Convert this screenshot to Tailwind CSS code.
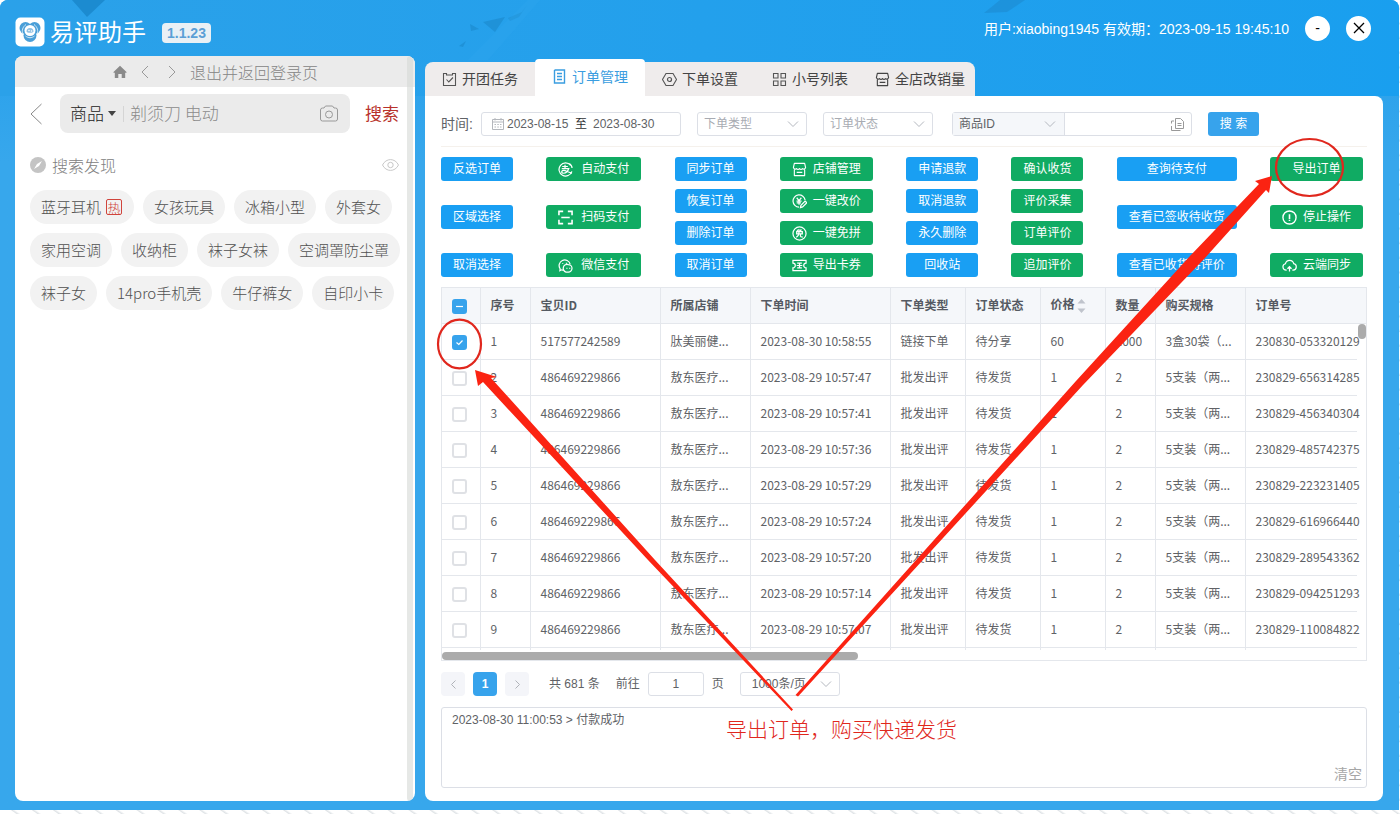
<!DOCTYPE html>
<html lang="zh-CN">
<head>
<meta charset="utf-8">
<title>易评助手</title>
<script src="https://cdn.jsdelivr.net/npm/@tailwindcss/browser@4"></script>
</head>
<body class="relative min-h-screen overflow-hidden bg-white bg-[repeating-linear-gradient(35deg,#ffffff_0px,#ffffff_9px,#dfe3e6_10px,#ffffff_12px)] font-['Liberation_Sans','Noto_Sans_CJK_SC',sans-serif] text-xs text-[#606266]">

<!-- shared icon shapes -->
<svg class="hidden" aria-hidden="true">
  <symbol id="down" viewBox="0 0 12 8"><path d="M1 1.500 6 6.500 11 1.500" fill="none" stroke="#b4b8bf" stroke-width="1"/></symbol>
  <symbol id="shop" viewBox="0 0 16 16"><path d="M2.500 1.500h11l1 4.500a2 2 0 0 1-3.300 1 2 2 0 0 1-3.200 0 2 2 0 0 1-3.200 0A2 2 0 0 1 1.500 6zM2.500 8v6.500h11V8M5 11h6" fill="none" stroke="currentColor" stroke-width="1.200" stroke-linejoin="round"/></symbol>
</svg>

<div class="relative mr-px flex h-[calc(100vh-4px)] flex-col overflow-hidden rounded-t-lg bg-[#36a6ec] bg-linear-to-b from-[#209eeb] to-[#37a7ec] to-20%">
  <div class="absolute inset-x-0 top-0 h-24 bg-linear-to-r from-[#2ba1e9] to-[#199fef]"></div>
  <svg class="absolute left-0 top-0" width="1100" height="96" aria-hidden="true">
    <g fill="#1c8bd0">
      <path d="M72 0h33L87 17z"/><path d="M483 22l22-5-10 15z" opacity=".7"/><path d="M508 18l14-6 5-7-8 12-9 4z" opacity=".5"/><path d="M470 24l9 5-8 2z" opacity=".7"/><path d="M459 46l7-5-3 6z" opacity=".7"/><path d="M984 13 1000 0h25l-18 12z" opacity=".6"/>
    </g>
    <path d="M540 0h-12l-60 60h20z" fill="#35a9ef" opacity=".2"/>
  </svg>

  <header class="relative flex h-14 shrink-0 items-center pl-[15px] pr-[28px]">
    <svg class="mt-2 shrink-0" width="30" height="30" viewBox="0 0 30 30" aria-hidden="true">
      <rect x=".5" y=".5" width="29" height="29" rx="5" fill="#fff"/>
      <circle cx="10.500" cy="11" r="6" fill="#4a9fd8"/><circle cx="19.500" cy="11" r="6" fill="#4a9fd8"/><circle cx="15" cy="18.500" r="6.500" fill="#4a9fd8"/>
      <path d="M8 17c-1.500-3-.5-7 3-9.500M22 17c1.500-3 .5-7-3-9.500M10.500 19c3 2.300 6 2.300 9 0" fill="none" stroke="#d3e9f6" stroke-width="1"/>
      <circle cx="15" cy="13.500" r="5.500" fill="#fff"/>
      <path d="M11.500 14.500a3.500 3.500 0 1 1 7 0c0 1.800-7 1.800-7 0z" fill="#8fc1e3"/><circle cx="14" cy="13.500" r=".8" fill="#fff"/><circle cx="16.500" cy="14" r=".8" fill="#fff"/>
    </svg>
    <h1 class="ml-[5px] mt-[9px] text-2xl leading-6 text-white">易评助手</h1>
    <span class="ml-4 mt-[9px] rounded-sm bg-[#e9f0f5] px-[5px] text-sm font-bold leading-5 text-[#5b9fd6]">1.1.23</span>
    <p class="ml-auto mt-[2px] text-sm text-white">用户:xiaobing1945 有效期：2023-09-15 19:45:10</p>
    <button class="ml-4 flex size-[25px] items-center justify-center rounded-full bg-white text-sm text-black" aria-label="最小化">-</button>
    <button class="ml-4 flex size-[25px] items-center justify-center rounded-full bg-white text-black" aria-label="关闭"><svg width="12" height="12" viewBox="0 0 12 12"><path d="M1 1l10 10M11 1 1 11" stroke="currentColor" stroke-width="1.300"/></svg></button>
  </header>

  <main class="relative flex min-h-0 flex-1 gap-[10px] pb-[9px] pl-[15px] pr-4">
    <!-- shop browser -->
    <aside class="relative flex w-[400px] shrink-0 flex-col overflow-hidden rounded-lg bg-white font-['Noto_Sans_CJK_SC',sans-serif] font-light">
      <div class="absolute inset-y-0 right-[2px] z-10 w-[6px] rounded bg-[#d5d9d5]/60"></div>
      <nav class="flex h-[31px] items-center bg-[#ebebeb] pl-[98px] text-base text-[#858585]">
        <button aria-label="首页"><svg width="14" height="14" viewBox="0 0 14 14"><path d="M7 .8 13.500 7v.8h-1.300V13H8.700V9H5.300v4H1.800V7.800H.5V7z" fill="#8a8a8a"/></svg></button>
        <button class="ml-[14px]" aria-label="后退"><svg width="8" height="14" viewBox="0 0 8 14"><path d="M7 1 1 7l6 6" fill="none" stroke="#999"/></svg></button>
        <button class="ml-[19px]" aria-label="前进"><svg width="8" height="14" viewBox="0 0 8 14"><path d="M1 1l6 6-6 6" fill="none" stroke="#999"/></svg></button>
        <a href="#" class="ml-[14px] leading-6">退出并返回登录页</a>
      </nav>
      <form class="mt-[7px] flex h-[39px] items-center pl-[15px] pr-4 text-[17px]">
        <button type="button" aria-label="返回"><svg width="12" height="22" viewBox="0 0 12 22"><path d="M11.500 1 1 11l10.500 10" fill="none" stroke="#888"/></svg></button>
        <div class="ml-[18px] flex h-full min-w-0 flex-1 items-center rounded-lg bg-[#ebebeb] pl-[10px] pr-3">
          <button type="button" class="flex items-center gap-1 text-[#222]">商品<svg width="8" height="5" viewBox="0 0 8 5"><path d="M0 0h8L4 5z" fill="#444"/></svg></button>
          <span class="ml-[7px] h-4 w-px bg-[#d5d5d5]"></span>
          <input class="ml-[6px] w-0 flex-1 bg-transparent outline-none placeholder:text-[#8c8c8c]" aria-label="搜索商品" placeholder="剃须刀 电动">
          <button type="button" aria-label="拍照搜索"><svg width="18" height="17" viewBox="0 0 18 17"><path d="M5.500 1h7L14 3h1.500a2 2 0 0 1 2 2v9a2 2 0 0 1-2 2h-13a2 2 0 0 1-2-2V5a2 2 0 0 1 2-2H4z" fill="none" stroke="#999"/><circle cx="9" cy="9.500" r="3.500" fill="none" stroke="#999"/></svg></button>
        </div>
        <button class="ml-[15px] font-normal text-[#b8322b]">搜索</button>
      </form>
      <div class="mt-5 flex items-center pl-[15px] pr-4 text-base leading-6 text-[#808080]">
        <svg width="16" height="16" viewBox="0 0 16 16"><circle cx="8" cy="8" r="8" fill="#c4c4c4"/><path d="M12 4 9 9 4 12l3-5z" fill="#fff"/></svg>
        <h2 class="ml-[6px]">搜索发现</h2>
        <button class="ml-auto" aria-label="隐藏"><svg width="17" height="12" viewBox="0 0 17 12"><path d="M.5 6C4-1.200 13-1.200 16.500 6 13 13.200 4 13.200.5 6z" fill="none" stroke="#c8c8c8"/><circle cx="8.500" cy="6" r="2.700" fill="none" stroke="#c8c8c8"/></svg></button>
      </div>
      <div id="tags" class="mt-[13px] flex flex-wrap gap-[9px] pl-[15px] pr-[14px] text-[15px] text-[#505050]"></div>
    </aside>

    <section class="flex min-w-0 flex-1 flex-col pt-[3px]">
      <nav class="relative flex h-[37px] shrink-0 items-end text-sm text-[#444]">
        <button class="flex h-[34px] w-[110px] items-center justify-center gap-[5px] rounded-tl-lg bg-[#efecec]"><svg width="15" height="15" viewBox="0 0 15 15"><path d="M1.500 1.500h3V3h6V1.500h3v12h-12zM4.500 7.500l2.300 2.500L11 5.500" fill="none" stroke="#555" stroke-width="1.100"/></svg>开团任务</button>
        <button class="flex h-[37px] w-[110px] items-center justify-center gap-[5px] rounded-t bg-white pb-[2px] text-[#3a9de0]"><svg width="15" height="15" viewBox="0 0 15 15"><path d="M2.500 1h10v11.500M2.500 1v13h10v-2M5 4.500h5M5 7.500h5M5 10.500h5" fill="none" stroke="currentColor" stroke-width="1.400"/></svg>订单管理</button>
        <button class="flex h-[34px] w-[110px] items-center justify-center gap-[5px] bg-[#efecec]"><svg width="15" height="15" viewBox="0 0 15 15"><path d="M4 1.500h7l3.500 6-3.500 6H4l-3.500-6z" fill="none" stroke="#555" stroke-width="1.100"/><circle cx="7.500" cy="7.500" r="2" fill="none" stroke="#555" stroke-width="1.200"/></svg>下单设置</button>
        <button class="flex h-[34px] w-[110px] items-center justify-center gap-[5px] bg-[#efecec]"><svg width="15" height="15" viewBox="0 0 15 15"><path d="M1.500 1.500h4.500V6H1.500zM9 1.500h4.500V6H9zM1.500 9h4.500v4.500H1.500zM9 9h4.500v4.500H9z" fill="none" stroke="#555" stroke-width="1.100"/></svg>小号列表</button>
        <button class="flex h-[34px] w-[110px] items-center justify-center gap-[5px] rounded-tr-lg bg-[#efecec]"><svg width="15" height="15"><use href="#shop"/></svg>全店改销量</button>
      </nav>

      <div class="flex min-h-0 flex-1 flex-col rounded-b-lg rounded-tr-lg bg-white px-4 pb-[13px] pt-4">
        <form class="flex h-6 shrink-0 items-center">
          <label for="from" class="w-[30px] whitespace-nowrap text-sm">时间:</label>
          <div class="ml-[10px] flex h-6 w-[200px] items-center rounded-[3px] border border-[#dcdfe6] pl-[10px] text-[#606266]">
            <svg class="shrink-0" width="12" height="12" viewBox="0 0 12 12"><path d="M.5 1.500h11v10H.5zM.5 4h11M3 0v2.500M9 0v2.500M2.500 6.500h1.500M5.300 6.500h1.500M8 6.500h1.500M2.500 9h1.500M5.300 9h1.500M8 9h1.500" fill="none" stroke="#b4b7bc"/></svg>
            <input id="from" class="ml-[3px] w-[64px] outline-none" value="2023-08-15">
            <span class="ml-1 mr-[6px] text-[#303133]">至</span>
            <input class="w-[66px] outline-none" aria-label="结束日期" value="2023-08-30">
          </div>
          <div class="relative ml-4 w-[110px]"><select aria-label="下单类型" class="h-6 w-full appearance-none rounded-[3px] border border-[#dcdfe6] bg-white pl-[6px] leading-[22px] text-[#a8abb2] outline-none"><option>下单类型</option></select><svg class="pointer-events-none absolute right-2 top-2" width="12" height="8"><use href="#down"/></svg></div>
          <div class="relative ml-4 w-[110px]"><select aria-label="订单状态" class="h-6 w-full appearance-none rounded-[3px] border border-[#dcdfe6] bg-white pl-[6px] leading-[22px] text-[#a8abb2] outline-none"><option>订单状态</option></select><svg class="pointer-events-none absolute right-2 top-2" width="12" height="8"><use href="#down"/></svg></div>
          <div class="ml-[19px] flex h-6 w-60 rounded-[3px] border border-[#dcdfe6]">
            <div class="relative w-[112px] border-r border-[#dcdfe6] bg-[#f5f7fa]"><select aria-label="查询字段" class="h-[22px] w-full appearance-none bg-transparent pl-[6px] leading-[22px] text-[#606266] outline-none"><option>商品ID</option></select><svg class="pointer-events-none absolute right-2 top-[7px]" width="12" height="8"><use href="#down"/></svg></div>
            <input aria-label="查询内容" class="w-0 flex-1 px-2 outline-none">
            <button type="button" class="mr-[7px]" aria-label="粘贴"><svg width="13" height="13" viewBox="0 0 13 13"><path d="M4.500.5h5l3 3v7h-8zM3 3H.500v2.500M.5 8v4.500h9M6.500 5.500h4M6.500 7.500h4" fill="none" stroke="#999"/></svg></button>
          </div>
          <button type="button" class="ml-4 h-6 w-[51px] rounded-[3px] bg-[#37a3ec] text-white">搜 索</button>
        </form>

        <div class="mt-[10px] h-px shrink-0 bg-[#f5f1ec]"></div>

        <div id="actions" class="mt-[10px] flex h-[120px] shrink-0 justify-between pr-1 text-white"></div>

        <div class="relative mt-[10px] min-h-0 flex-1 overflow-hidden border border-[#e4e7ec] font-['Noto_Sans_CJK_SC',sans-serif]">
          <table class="w-full table-fixed border-collapse text-left">
            <colgroup><col class="w-[38px]"><col class="w-[50px]"><col class="w-[130px]"><col class="w-[90px]"><col class="w-[140px]"><col class="w-[75px]"><col class="w-[75px]"><col class="w-[65px]"><col class="w-[50px]"><col class="w-[90px]"><col><col class="w-[9px]"></colgroup>
            <thead class="bg-[#f5f7fa] text-[#555a62]"><tr id="head" class="h-[35px] border-b border-[#e4e7ec]"></tr></thead>
            <tbody id="rows"></tbody>
          </table>
          <div class="absolute inset-x-0 bottom-0 flex h-[10px] items-end bg-white"><div class="h-2 w-[45%] rounded-full bg-[#ababab]"></div></div>
          <div class="absolute right-0 top-9 h-[15px] w-2 rounded-full bg-[#ababab]"></div>
        </div>

        <div class="mt-[11px] flex h-6 shrink-0 items-center">
          <button class="flex size-6 items-center justify-center rounded-sm bg-[#f4f5f9]" aria-label="上一页"><svg width="5" height="9" viewBox="0 0 5 9"><path d="M4.500.5.5 4.500l4 4" fill="none" stroke="#b0b3b9"/></svg></button>
          <button class="ml-2 size-6 rounded-sm bg-[#37a3ec] font-bold text-white">1</button>
          <button class="ml-2 flex size-6 items-center justify-center rounded-sm bg-[#f4f5f9]" aria-label="下一页"><svg width="5" height="9" viewBox="0 0 5 9"><path d="M.5.5l4 4-4 4" fill="none" stroke="#b0b3b9"/></svg></button>
          <span class="ml-5">共 681 条</span>
          <label for="page" class="ml-4">前往</label>
          <input id="page" class="mx-2 h-6 w-14 rounded-[3px] border border-[#dcdfe6] text-center outline-none" value="1">
          <span>页</span>
          <div class="relative ml-4 w-[100px]"><select aria-label="每页条数" class="h-6 w-full appearance-none rounded-[3px] border border-[#dcdfe6] bg-white pl-[11px] leading-[22px] outline-none"><option>1000条/页</option></select><svg class="pointer-events-none absolute right-2 top-2" width="12" height="8"><use href="#down"/></svg></div>
        </div>

        <div class="relative mt-[11px] h-[81px] shrink-0">
          <textarea aria-label="日志" class="block h-full w-full resize-none rounded-[3px] border border-[#dcdfe6] px-[10px] py-[2px] leading-5 outline-none">2023-08-30 11:00:53 &gt; 付款成功</textarea>
          <button class="absolute bottom-1 right-[5px] text-sm text-[#a6a6a6]">清空</button>
        </div>
      </div>
    </section>
  </main>
</div>

<!-- hand-drawn notes above the window -->
<svg class="pointer-events-none absolute left-0 top-0" width="1400" height="814" viewBox="0 0 1400 814" aria-hidden="true">
  <g fill="none" stroke="#e0271d" stroke-width="2.200"><ellipse cx="459.500" cy="344" rx="21.500" ry="24.300"/><ellipse cx="1309.500" cy="167.500" rx="33.500" ry="28.500"/></g>
  <path fill="#fb2312" d="M475 370 497 377 491 378 655 560 793 709.500 791.500 711 648 560 483 382 478 386z"/>
  <path fill="#fb2312" d="M1272 176 1269 193 1266 190 1205 258 1083 385 798 696.500 795.500 695 1076 381 1190 256 1259 184 1255 181z"/>
</svg>
<p class="pointer-events-none absolute left-[726px] top-[715px] text-[21px] font-light leading-[30px] text-[#e0271d]">导出订单，购买快递发货</p>

<script>
const tags = ['蓝牙耳机','女孩玩具','冰箱小型','外套女','家用空调','收纳柜','袜子女袜','空调罩防尘罩','袜子女','14pro手机壳','牛仔裤女','自印小卡'];
document.getElementById('tags').innerHTML = tags.map((t, i) =>
  `<button class="flex h-[34px] items-center rounded-full bg-[#f2f2f2] px-[11px]">${t}${i ? '' : '<span class="ml-[5px] mr-px flex size-4 items-center justify-center rounded-[2px] border border-[#d0443c] text-[13px] leading-none text-[#d0443c]">热</span>'}</button>`).join('');

const icon = d => `<svg class="shrink-0" width="15" height="15" viewBox="0 0 16 16" fill="none" stroke="currentColor" stroke-width="1.300">${d}</svg>`;
const icons = {
  pay: icon('<path d="M13.500 3.500A7 7 0 1 0 14.800 10M4.500 4.800h6M7.500 3v4M4 7h7.500c-1 3-3 5-5.500 5-3 0-2.500-3 0-3 2.500 0 4.500 2 9 3M12 1.500a6 6 0 0 1 3 5"/>'),
  scan: icon('<path d="M1 5.500V1.500h4.500M10.500 1.500H15v4M15 10.500v4h-4.500M5.500 14.500H1v-4M3.500 8h9" stroke-width="1.700"/>'),
  wechat: icon('<path d="M6 13c-1 0-1.500-.2-2-.4L2 13.500l.3-2A6 6 0 1 1 13 6.500"/><path d="M11 7a4 4 0 1 1-.1 8H8.500a4 4 0 0 1 2.500-8zM5 5.500v1M9 5v1M9.500 10.500v1M12.500 10.500v1"/>'),
  shop: '<svg class="shrink-0" width="15" height="15"><use href="#shop"/></svg>',
  price: icon('<path d="M14 6.500A6.500 6.500 0 1 0 7.500 14M5 4l2.500 3L10 4M4.800 7.500h5.400M5 9.500h4.500M7.500 7v4.500"/><path d="m9 14.500.5-2.500 4.500-4.500 1.800 1.800-4.500 4.500z"/>'),
  free: icon('<circle cx="8" cy="8" r="7"/><path d="M7 3.500 5 6M6.500 4.500h3L8.500 6M5 6h6v2.500H5zM7.500 6.500c0 3-1 4.500-3 5.500M9 8.500v2.500c0 .8.500.8 2.500.8"/>'),
  card: icon('<path d="M1 2.500h14v3a2.500 2.500 0 0 0 0 5v3H1v-3a2.500 2.500 0 0 0 0-5zM5.500 5.500h5M5 8h6M5.500 10.500h5M8 5.500v5"/>'),
  stop: icon('<circle cx="8" cy="8" r="7" stroke-width="1.500"/><path d="M8 4.500v5M8 10.500v1.200" stroke-width="1.700"/>'),
  cloud: icon('<path d="M5 13H4.500a3.500 3.500 0 0 1-.8-6.900 4.500 4.500 0 0 1 8.800 0A3.500 3.500 0 0 1 12 13h-1M8 14.500V9.500M5.800 11.500 8 9.300l2.200 2.200"/>')
};
const B = 'bg-[#199ff3]', G = 'bg-[#10ab63]';
const columns = [
  [B, ['反选订单'], ['区域选择'], ['取消选择']],
  [G, ['自动支付','pay'], ['扫码支付','scan'], ['微信支付','wechat']],
  [B, ['同步订单'], ['恢复订单'], ['删除订单'], ['取消订单']],
  [G, ['店铺管理','shop'], ['一键改价','price'], ['一键免拼','free'], ['导出卡券','card']],
  [B, ['申请退款'], ['取消退款'], ['永久删除'], ['回收站']],
  [G, ['确认收货'], ['评价采集'], ['订单评价'], ['追加评价']],
  [B, ['查询待支付'], ['查看已签收待收货'], ['查看已收货待评价']],
  [G, ['导出订单'], ['停止操作','stop'], ['云端同步','cloud']]
];
document.getElementById('actions').innerHTML = columns.map(([c, ...items], n) =>
  `<div class="flex flex-col justify-between">${items.map(([t, i]) =>
    `<button class="${c} ${n === 1 ? 'gap-2' : 'gap-[6px]'} flex h-6 items-center justify-center rounded-[3px] px-3">${i ? icons[i] : ''}${t}</button>`).join('')}</div>`).join('');

const line = 'border-r border-[#e4e7ec]';
const sort = '<svg class="ml-[2px] inline" width="9" height="16" viewBox="0 0 9 16"><path d="M4.500 1 8.500 5.500h-8zM4.500 15l4-4.500h-8z" fill="#c0c4cc"/></svg>';
const box = 'relative block size-[15px] appearance-none rounded-[3px] border-2 border-[#dfe1e5] bg-white checked:border-[#37a3ec] checked:bg-[#37a3ec] indeterminate:border-[#37a3ec] indeterminate:bg-[#37a3ec]';
const mark = d => `<svg class="pointer-events-none absolute left-[2px] top-[2px]" width="11" height="11" viewBox="0 0 11 11"><path d="${d}" fill="none" stroke="#fff" stroke-width="1.200"/></svg>`;
document.getElementById('head').innerHTML =
  `<th class="${line} pl-[10px] pt-[3px]"><div class="relative w-[15px]"><input type="checkbox" id="all" aria-label="全选" class="${box}">${mark('M2 5.500h7')}</div></th>` +
  ['序号','宝贝ID','所属店铺','下单时间','下单类型','订单状态','价格' + sort,'数量','购买规格'].map(t => `<th class="${line} truncate pl-[10px] font-bold">${t}</th>`).join('') +
  '<th class="pl-[10px] font-bold">订单号</th><th></th>';
document.getElementById('all').indeterminate = true;

const data = [
  ['30 10:58:55','230830-053320129'],['29 10:57:47','230829-656314285'],['29 10:57:41','230829-456340304'],
  ['29 10:57:36','230829-485742375'],['29 10:57:29','230829-223231405'],['29 10:57:24','230829-616966440'],
  ['29 10:57:20','230829-289543362'],['29 10:57:14','230829-094251293'],['29 10:57:07','230829-110084822']
];
document.getElementById('rows').innerHTML = data.map(([time, no], i) => {
  const f = i === 0;
  const cells = [i + 1, f ? '517577242589' : '486469229866', f ? '肽美丽健...' : '敖东医疗...', '2023-08-' + time,
    f ? '链接下单' : '批发出评', f ? '待分享' : '待发货', f ? 60 : 1, f ? 1000 : 2, f ? '3盒30袋（...' : '5支装（两...'];
  return `<tr class="h-9"><td class="${line} border-b pl-[10px] pt-[3px]"><div class="relative w-[15px]"><input type="checkbox" aria-label="选择第${i + 1}行" class="${box}"${f ? ' checked' : ''}>${f ? mark('M2.500 5.500 4.800 7.500 8.500 3.500') : ''}</div></td>` +
    cells.map(t => `<td class="${line} whitespace-nowrap border-b pl-[10px]">${t}</td>`).join('') +
    `<td class="whitespace-nowrap border-b border-[#e4e7ec] pl-[10px]">${no}</td><td></td></tr>`;
}).join('') + `<tr class="h-9">${`<td class="${line}"></td>`.repeat(10)}<td></td><td></td></tr>`;
</script>
</body>
</html>
